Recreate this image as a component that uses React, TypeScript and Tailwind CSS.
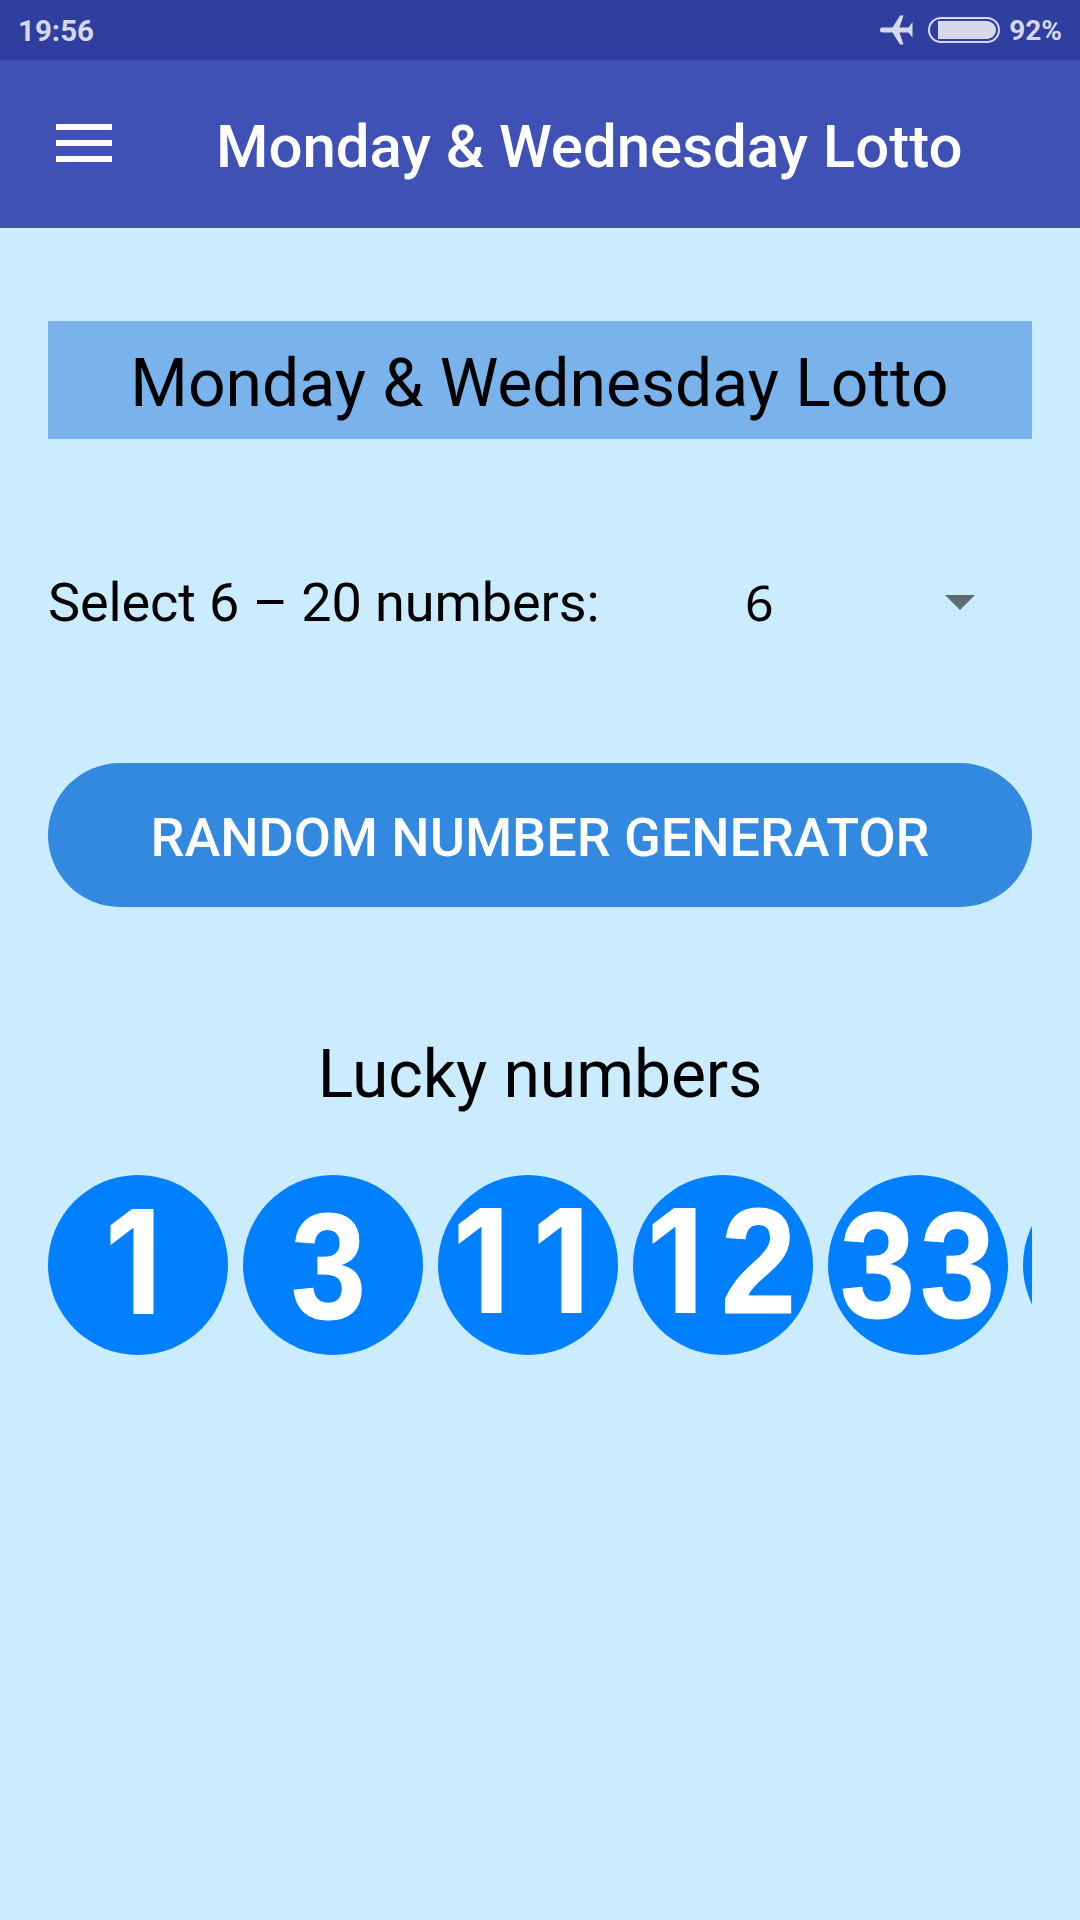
interface Ball {
  label: string;
  shift: string;
}

const BALLS: Ball[] = [
  { label: '1', shift: 'translate-x-[1px] -translate-y-[4px]' },
  { label: '3', shift: '-translate-x-[6px]' },
  { label: '11', shift: '-translate-x-[1px] -translate-y-[5px]' },
  { label: '12', shift: '-translate-x-[2px] -translate-y-[5px]' },
  { label: '33', shift: '-translate-x-[2px] -translate-y-[1px]' },
  // still scrolled out of view
  { label: '', shift: '' },
];

const DIGIT_ONE =
  'inline-block w-[80px] scale-x-93 pr-[12px] text-center font-[Inter,sans-serif] text-[144px] leading-none';
const DIGIT_TWO =
  'inline-block w-[80px] scale-x-90 -translate-x-[4px] text-center text-[150px] leading-none [-webkit-text-stroke:1px_white]';
const DIGIT =
  'inline-block w-[80px] scale-x-90 text-center text-[150px] leading-none [-webkit-text-stroke:1px_white]';

function digitClass(digit: string) {
  if (digit === '1') return DIGIT_ONE;
  if (digit === '2') return DIGIT_TWO;
  return DIGIT;
}

function StatusBar() {
  return (
    <div className="flex h-[60px] items-center justify-between bg-[#303e9f] px-[18px] text-[#d6d9ec]">
      <span className="pt-px text-[29.5px] leading-[60px] font-bold">19:56</span>
      <div className="flex items-center">
        <svg className="mr-[15px]" width="33" height="30" viewBox="0 0 33 30" fill="currentColor">
          <path d="M2.5 12.5H12.5L20 0.5H23.5L19.5 12.5H28.5L32.5 7V22.5L28.5 17.5H19.5L23.5 29.5H20L12.5 17.5H2.5A2.5 2.5 0 0 1 2.5 12.5Z" />
        </svg>
        <div className="mr-[9px] flex h-[26px] w-[72px] items-center rounded-full border-2 border-[#d6d9ec] pl-2">
          <div className="h-[18px] w-[58px] rounded-r-full bg-[#d6d9ec]" />
        </div>
        <span className="pt-px text-[28px] leading-[59px] font-bold">92%</span>
      </div>
    </div>
  );
}

function AppBar() {
  return (
    <header className="flex h-[168px] items-center bg-[#3f51b5] pl-14">
      <div className="mb-[2px] flex flex-col gap-[10px]">
        <div className="h-[6px] w-14 bg-white" />
        <div className="h-[6px] w-14 bg-white" />
        <div className="h-[6px] w-14 bg-white" />
      </div>
      <h1 className="ml-[104px] pt-[5px] text-[60px] leading-none font-medium tracking-[-0.04px] text-white">
        Monday &amp; Wednesday Lotto
      </h1>
    </header>
  );
}

function LottoBall({ label, shift }: Ball) {
  return (
    <div className="size-[180px] shrink-0 rounded-full bg-[#0080ff] text-center font-['Liberation_Sans',sans-serif] text-[152px] leading-[180px] font-bold whitespace-nowrap text-white">
      <div className={shift}>
        {label.split('').map((digit, i) => (
          <span key={i} className={digitClass(digit)}>
            {digit}
          </span>
        ))}
      </div>
    </div>
  );
}

export default function App() {
  return (
    <div className="h-[1920px] w-[1080px] overflow-hidden bg-[#caecfe] font-[Roboto,sans-serif] text-black">
      <StatusBar />
      <AppBar />

      <main className="px-12 pt-[93px]">
        <h2 className="flex h-[118px] items-center justify-center bg-[#7ab2ec] pt-[7px] pr-px text-[66px] leading-none">
          Monday &amp; Wednesday Lotto
        </h2>

        {/* Count picker */}
        <div className="mt-[123px] flex h-[80px] items-center">
          <span className="w-[697px] pt-px text-[54px] leading-[80px] tracking-[-0.1px]">
            Select 6 – 20 numbers:
          </span>
          <span className="w-[200px] font-['Noto_Sans',sans-serif] text-[50px] leading-[80px]">6</span>
          <svg width="30" height="15" viewBox="0 0 30 15" fill="#5d6d75">
            <path d="M0 0H30L15 15Z" />
          </svg>
        </div>

        <button className="mt-[121px] flex h-[144px] w-full items-center justify-center rounded-full bg-[#3388e0] pt-[5px] text-[54px] leading-none font-medium tracking-[-0.04px] text-white">
          RANDOM NUMBER GENERATOR
        </button>

        <h3 className="mt-[128px] text-center text-[66px] leading-[80px] tracking-[-0.08px]">
          Lucky numbers
        </h3>

        {/* Drawn balls, the row runs past the right edge */}
        <div className="mt-[52px] flex gap-[15px] overflow-hidden py-2">
          {BALLS.map((ball, i) => (
            <LottoBall key={i} {...ball} />
          ))}
        </div>
      </main>
    </div>
  );
}
